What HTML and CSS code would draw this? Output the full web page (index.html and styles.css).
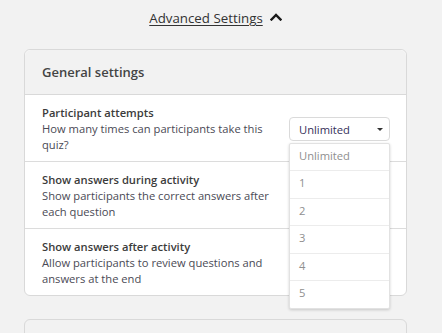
FILE: index.html
```html
<!DOCTYPE html>
<html>
<head>
<meta charset="utf-8">
<link rel="stylesheet" href="styles.css">
</head>
<body>
<div class="page">
  <div class="adv">
    <span class="adv-label">Advanced Settings</span>
    <svg class="adv-icon" width="12" height="8" viewBox="0 0 12 8"><polyline points="1.5,6.5 6,2 10.5,6.5" fill="none" stroke="#1a1a1a" stroke-width="2.4" stroke-linecap="square"/></svg>
  </div>
  <div class="card">
    <div class="card-head">General settings</div>
    <div class="row">
      <div class="row-text">
        <div class="row-title">Participant attempts</div>
        <div class="row-desc">How many times can participants take this quiz?</div>
      </div>
      <div class="select-wrap">
        <div class="select">
          <span class="select-value">Unlimited</span>
          <span class="caret"></span>
        </div>
        <ul class="menu">
          <li class="menu-item">Unlimited</li>
          <li class="menu-item">1</li>
          <li class="menu-item">2</li>
          <li class="menu-item">3</li>
          <li class="menu-item">4</li>
          <li class="menu-item">5</li>
        </ul>
      </div>
    </div>
    <div class="row">
      <div class="row-text">
        <div class="row-title">Show answers during activity</div>
        <div class="row-desc">Show participants the correct answers after each question</div>
      </div>
    </div>
    <div class="row last">
      <div class="row-text">
        <div class="row-title">Show answers after activity</div>
        <div class="row-desc">Allow participants to review questions and answers at the end</div>
      </div>
    </div>
  </div>
  <div class="card next"></div>
</div>
</body>
</html>
```

FILE: styles.css
```css
* { box-sizing: border-box; }
html, body { margin: 0; padding: 0; }
body {
  background: #f2f2f2;
  font-family: "Open Sans", "Liberation Sans", sans-serif;
  color: #3a3a3a;
  width: 442px;
  height: 333px;
  overflow: hidden;
}
.page {
  padding: 8px 35px 0 24px;
}
.adv {
  display: flex;
  justify-content: center;
  align-items: center;
  gap: 7px;
  height: 20px;
  margin-bottom: 21px;
}
.adv-label {
  font-size: 13.3px;
  line-height: 20px;
  color: #333;
  text-decoration: underline;
  text-underline-offset: 2px;
}
.adv-icon { display: block; margin-top: -2px; }
.card {
  width: 383px;
  background: #fff;
  border: 1px solid #d9d9d9;
  border-radius: 6px;
}
.card-head {
  background: #f2f2f2;
  border-radius: 6px 6px 0 0;
  border-bottom: 1px solid #d9d9d9;
  height: 45px;
  padding: 12px 17px 0;
  font-size: 13px;
  line-height: 20px;
  font-weight: 600;
  color: #444;
}
.row {
  display: flex;
  align-items: center;
  min-height: 66px;
  padding: 10px 16px 8px 17px;
  border-bottom: 1px solid #dcdcdc;
}
.row.last { border-bottom: none; min-height: 65px; }
.row-text { width: 236px; }
.row-title {
  font-size: 11.2px;
  line-height: 16px;
  font-weight: 600;
  color: #3b3b3b;
}
.row-desc {
  font-size: 11.2px;
  line-height: 16px;
  color: #4a4a55;
}
.select-wrap {
  position: relative;
  margin-left: auto;
  width: 101px;
}
.select {
  display: flex;
  align-items: center;
  height: 24px;
  padding: 0 6px 0 9px;
  border: 1px solid #dadada;
  border-radius: 4px;
  background: #fff;
}
.select-value {
  font-size: 11.2px;
  color: #35305a;
  flex: 1;
}
.caret {
  width: 0;
  height: 0;
  border-left: 3px solid transparent;
  border-right: 3px solid transparent;
  border-top: 3.5px solid #333;
}
.menu {
  position: absolute;
  top: 26px;
  left: 0;
  width: 101px;
  margin: 0;
  padding: 0;
  list-style: none;
  background: #fff;
  border: 1px solid #e2e2e2;
  border-radius: 2px;
  box-shadow: 0 1px 3px rgba(0,0,0,0.18);
  z-index: 5;
}
.menu-item {
  height: 27.4px;
  line-height: 23px;
  padding: 0 0 0 9px;
  font-size: 11.2px;
  color: #8f8f8f;
  border-bottom: 1px solid #ececec;
}
.menu-item:last-child { border-bottom: none; }
.card.next {
  margin-top: 23px;
  height: 40px;
  background: #f2f2f2;
}
```
